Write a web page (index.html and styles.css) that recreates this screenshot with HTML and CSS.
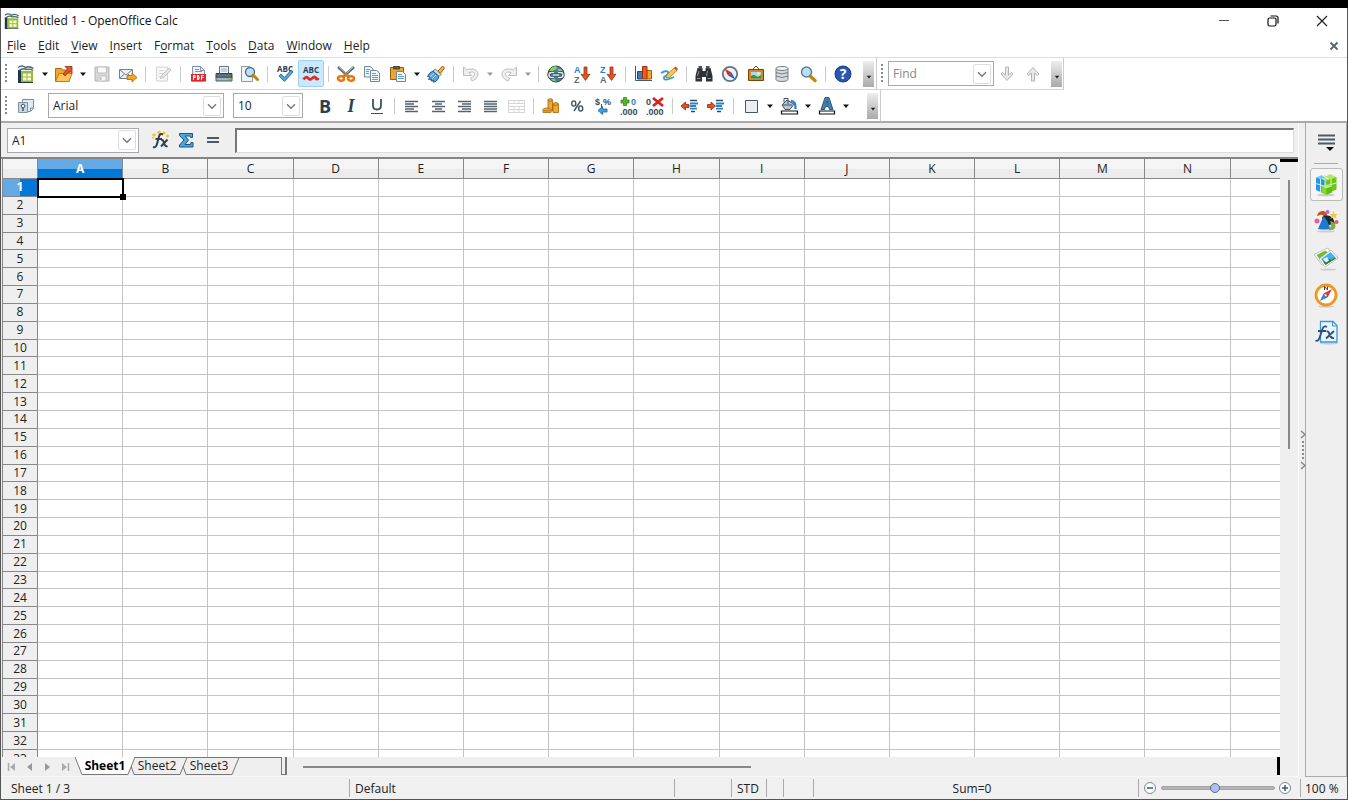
FILE: index.html
```html
<!DOCTYPE html>
<html lang="en">
<head>
<meta charset="utf-8">
<title>Untitled 1 - OpenOffice Calc</title>
<link rel="stylesheet" href="styles.css">
</head>
<body>
<svg class="defs" aria-hidden="true">
  <defs>
    <symbol id="calc" viewBox="0 0 20 20">
      <path d="M3 3h14v15H3z" fill="#f4f7ec"/>
      <path d="M2 6h3v12h12v1H2z" fill="#1c3550"/>
      <path d="M5 7h12v11H5z" fill="#9cba35"/>
      <path d="M7 9.500h3.500v3H7zm4.500 0H15v3h-3.500zm-4.500 4h3.500v3H7zm4.500 0H15v3h-3.500z" fill="#f8fbdc"/>
      <path d="M2 3.500q4-3 7.500 0 4-2 8 1M3 6.500q4-3 7.500-1 4-1 6.500 1" fill="none" stroke="#4d6676" stroke-width="1.400"/>
    </symbol>
    <symbol id="chev" viewBox="0 0 18 20"><path d="M4.500 8l4.500 4.500L13.500 8" fill="none" stroke="#777" stroke-width="1.500"/></symbol>
    <symbol id="tri" viewBox="0 0 12 26"><path d="M3 11.500h6L6 15z" fill="currentColor"/></symbol>
    <symbol id="arrowdown" viewBox="0 0 20 20"><path d="M8.500 3h3v8l3-2.500 1.500 1.500-6 6.500L4 10l1.500-1.500 3 2.500z" fill="#e8e8e8" stroke="#b5b5b5"/></symbol>
    <symbol id="sortarrow" viewBox="0 0 20 20"><path d="M12 3h3v8l3-1-4.500 6.500L9 10l3 1z" fill="#e2531d" stroke="#9b2d12" stroke-width=".8"/></symbol>
    <symbol id="undo" viewBox="0 0 20 20"><path d="M2.500 3v8.500h8L8 8.700c6-2.700 8 2.800 1.500 5.300l1.500 3c10-4 7-15-5.500-11.200z" fill="#efefef" stroke="#bdbdbd"/></symbol>
    <symbol id="indent" viewBox="0 0 20 20"><path d="M10 4.500h7M11 15.500h4" stroke="#2d4a60" stroke-width="1.300"/><path d="M10 7.500h8M10 10h6M10 12.700h7" stroke="#2c83c8" stroke-width="1.800"/></symbol>
  </defs>
</svg>
<div class="window">
  <header class="titlebar">
    <svg class="app-icon"><use href="#calc"/></svg>
    <h1>Untitled 1 - OpenOffice Calc</h1>
    <div class="win-controls">
      <button aria-label="Minimize"><svg class="ic"><path d="M5 9.500h10" stroke="#555"/></svg></button>
      <button aria-label="Restore"><svg class="ic"><rect x="5" y="7" width="8" height="8" rx="1.500" fill="none" stroke="#111" stroke-width="1.200"/><path d="M7.500 5h5.500q2 0 2 2v5.500" fill="none" stroke="#111" stroke-width="1.200"/></svg></button>
      <button aria-label="Close"><svg class="ic"><path d="M5 5l10 10M15 5L5 15" stroke="#222" stroke-width="1.200"/></svg></button>
    </div>
  </header>
  <nav class="menubar" aria-label="Menu">
    <button><u>F</u>ile</button><button><u>E</u>dit</button><button><u>V</u>iew</button><button><u>I</u>nsert</button><button>F<u>o</u>rmat</button><button><u>T</u>ools</button><button><u>D</u>ata</button><button><u>W</u>indow</button><button><u>H</u>elp</button>
    <button class="doc-close" aria-label="Close document"><svg class="ic"><path d="M6.500 6.500l7 7M13.500 6.500l-7 7" stroke="#5b6775" stroke-width="2"/></svg></button>
  </nav>

  <div class="toolrow">
    <div class="toolbar" role="toolbar" aria-label="Standard">
      <span class="grip"></span>
      <button class="tb" aria-label="New"><svg class="ic"><use href="#calc"/></svg></button>
      <button class="drop" aria-label="New options"><svg><use href="#tri"/></svg></button>
      <button class="tb" aria-label="Open"><svg class="ic"><path d="M1.500 17V4.500h6l1 1.500h7v11z" fill="#f3a62a" stroke="#b06a0c"/><path d="M1.500 17.500L5 9.500h13l-3 8z" fill="#ffc45a" stroke="#c5790f"/><path d="M9 10l4.500-5L11 2.500h7v7L15.500 7 11 12z" fill="#e8501f" stroke="#9c2a10" stroke-width=".8"/></svg></button>
      <button class="drop" aria-label="Open options"><svg><use href="#tri"/></svg></button>
      <button class="tb" aria-label="Save" disabled><svg class="ic"><path d="M3 3h14v14H3z" fill="#d8d8d8" stroke="#b4b4b4"/><path d="M5.500 3h9v6h-9zM6 12h8v5H6z" fill="#f8f8f8" stroke="#c0c0c0"/><path d="M7.500 13h2v3h-2z" fill="#bbb"/></svg></button>
      <button class="tb" aria-label="E-mail"><svg class="ic"><path d="M1.500 5.500h13v9h-13z" fill="#eef3f8" stroke="#6d8296"/><path d="M2 6l6 5 6-5M2 14l4.500-4M14 14l-4-4" fill="none" stroke="#6d8296"/><path d="M9 11.500h5V9l5 4.500-5 4.500v-2.500H9z" fill="#f6a623" stroke="#a7650c" stroke-width=".8"/></svg></button>
      <span class="sep"></span>
      <button class="tb" aria-label="Edit file" disabled><svg class="ic"><path d="M3.500 3h11v14h-11z" fill="#f7f7f7" stroke="#d2d2d2"/><path d="M6 6.500h5M6 9.500h4M6 12.500h3" stroke="#d4d4d4"/><path d="M7.500 14.500l1-3L16 4l2 2-7.500 7.500z" fill="#e4e4e4" stroke="#c4c4c4"/></svg></button>
      <span class="sep"></span>
      <button class="tb" aria-label="Export as PDF"><svg class="ic"><path d="M4.500 2.500h8l4 4V17h-12z" fill="#e9f2fa" stroke="#8195a8"/><path d="M12.500 2.500v4h4M7 5.500h4M7 7.500h7" fill="none" stroke="#8195a8"/><path d="M3 10h15v7.500H3z" fill="#e0252c"/><path d="M5.500 16v-4.500H7v2H5.500M9.500 11.500v4h1q1.300-2 0-4zM13.500 16v-4.500h2.500M13.500 13.500H16" fill="none" stroke="#fff" stroke-width="1.100"/></svg></button>
      <button class="tb" aria-label="Print"><svg class="ic"><path d="M5.500 2.500h9v7h-9z" fill="#f3f6fa" stroke="#5b7184"/><path d="M7 5h6M7 7h6" stroke="#96a7b5"/><path d="M2 9.500h16V14H2z" fill="#5b6f80" stroke="#32424f"/><path d="M2 13.500h16v3.500H2z" fill="#aab4bc" stroke="#4d5c68"/><path d="M14 14.500h3v1.500h-3z" fill="#7bd11f"/></svg></button>
      <button class="tb" aria-label="Page preview"><svg class="ic"><path d="M1.500 2.500h8l3 3v12h-11z" fill="#f0f4f8" stroke="#8a9aaa"/><circle cx="10" cy="8" r="4.500" fill="#b8e2fa" stroke="#4e6a80" stroke-width="1.300"/><path d="M13 11l4.500 4.500" stroke="#c68208" stroke-width="3" stroke-linecap="round"/></svg></button>
      <span class="sep"></span>
      <button class="tb" aria-label="Spelling"><svg class="ic"><text class="abc" x="10" y="8" text-anchor="middle">ABC</text><path d="M4 12l2-2 3.500 3.500L16 6l2 2-8.500 9.500z" fill="#4aa8e0" stroke="#1a5e96" stroke-width=".8"/></svg></button>
      <button class="tb active" aria-label="AutoSpellcheck" aria-pressed="true"><svg class="ic"><text class="abc" x="10" y="9" text-anchor="middle">ABC</text><path d="M2.500 15.500q2.500-4 5-1 2 2 4-0.500 2.500-2.500 3.500 0.500 1 1.500 2.500-.5" fill="none" stroke="#e02a20" stroke-width="2.800"/></svg></button>
      <span class="sep"></span>
      <button class="tb" aria-label="Cut"><svg class="ic"><path d="M2 3l11 10M18 3L7 13" stroke="#5e6e7a" stroke-width="2.600"/><path d="M3 3l10 9M17 3L8 12" stroke="#c3ccd2" stroke-width=".8"/><g fill="none" stroke="#e57a0a" stroke-width="2.600"><ellipse cx="5" cy="14.500" rx="3" ry="2.200"/><ellipse cx="15" cy="14.500" rx="3" ry="2.200"/><path d="M7 13l3-2.500 3 2.500"/></g></svg></button>
      <button class="tb" aria-label="Copy"><svg class="ic"><g fill="#eef5fb" stroke="#71889b"><path d="M2.500 2.500h6l2.500 2.500v8H2.500z"/><path d="M8.500 6.500h6L17.500 9v8.500h-9z"/></g><path d="M4 5.500h4M4 7.500h3M4 9.500h3M10 9.500h4M10 11.500h6M10 13.500h6M10 15.500h6" stroke="#6c9bc0"/></svg></button>
      <button class="tb" aria-label="Paste"><svg class="ic"><path d="M2.500 3.500h13v12h-13z" fill="#eda632" stroke="#946010"/><path d="M5.500 2.500h6V5h-6z" fill="#6c6250" stroke="#463e30"/><path d="M8.500 7.500h6l3 3v7h-9z" fill="#eef5fb" stroke="#71889b"/><path d="M10 10.500h4M10 12.500h6M10 14.500h6" stroke="#6c9bc0"/></svg></button>
      <button class="drop" aria-label="Paste options"><svg><use href="#tri"/></svg></button>
      <button class="tb" aria-label="Format paintbrush"><svg class="ic"><path d="M12 7l4.500-5 2 2-4 5.500z" fill="#f2b134" stroke="#96650f"/><path d="M9.500 5l5.500 5.500-2 2-6-5.500z" fill="#d5dde3" stroke="#66798a"/><path d="M7 7L13 12.500q-2 6-6 5.500l.5-2-2.500 1 .5-2-3 .5L4 13l-2.500-.5Q3.500 8 7 7z" fill="#55a3dc" stroke="#235d94"/><path d="M8 9.500l-4 3M10 11l-4 4" stroke="#b4dbf5"/></svg></button>
      <span class="sep"></span>
      <button class="tb" aria-label="Undo" disabled><svg class="ic"><use href="#undo"/></svg></button>
      <button class="drop" aria-label="Undo options" disabled><svg><use href="#tri"/></svg></button>
      <button class="tb" aria-label="Redo" disabled><svg class="ic flip"><use href="#undo"/></svg></button>
      <button class="drop" aria-label="Redo options" disabled><svg><use href="#tri"/></svg></button>
      <span class="sep"></span>
      <button class="tb" aria-label="Hyperlink"><svg class="ic"><circle cx="10" cy="10" r="8" fill="#3d81a8" stroke="#2c5266"/><path d="M4 5q4-4 7-2 0 3-3 3-1 2-4 2zM12 5q3-1 5 3l-3 2q-3-2-2-5zM4 12q3 0 6 5-5 1-6-5z" fill="#a2c94d"/><path d="M8 13.500H5.500a2.500 2.500 0 010-5H8M12 8.500h2.500a2.500 2.500 0 010 5H12M7 11h6" fill="none" stroke="#263a45" stroke-width="3"/><path d="M8 13.500H5.500a2.500 2.500 0 010-5H8M12 8.500h2.500a2.500 2.500 0 010 5H12M7 11h6" fill="none" stroke="#e6ecee" stroke-width="1.500"/></svg></button>
      <button class="tb" aria-label="Sort ascending"><svg class="ic"><text class="srt blue" x="2" y="9">A</text><text class="srt" x="2" y="19">Z</text><use href="#sortarrow"/></svg></button>
      <button class="tb" aria-label="Sort descending"><svg class="ic"><text class="srt blue" x="2" y="9">Z</text><text class="srt" x="2" y="19">A</text><use href="#sortarrow"/></svg></button>
      <span class="sep"></span>
      <button class="tb" aria-label="Chart"><svg class="ic"><path d="M2.500 2v14.500H19" fill="none" stroke="#445a6a"/><path d="M4.500 7.500h5V15h-5z" fill="#3a7db5" stroke="#1d4b75"/><path d="M13.500 6.500h5V15h-5z" fill="#f5a52a" stroke="#9b620c"/><path d="M9.500 2.500h4.500V15H9.500z" fill="#ee5a22" stroke="#9c300d"/></svg></button>
      <button class="tb" aria-label="Show draw functions"><svg class="ic"><path d="M2 9q6-3 7-1t-4 5q-1 4 5 2l5-2" fill="none" stroke="#2d9be0" stroke-width="1.800"/><path d="M7 14l1-3.500L15 4l3 2.500-7.500 7z" fill="#f7c942" stroke="#9b7423" stroke-width=".8"/><path d="M15 4l3 2.500 1-1.500-2.500-2.500z" fill="#d94228"/></svg></button>
      <span class="sep"></span>
      <button class="tb" aria-label="Find and replace"><svg class="ic"><path d="M3.500 4h5v3h3V4h5l2 8v5.500H12V13H8v4.500H1.500V12z" fill="#2e3336"/><path d="M4.500 2H8v3H4.500zm7.500 0h3.500v3H12z" fill="#4b5053"/><path d="M3.500 12l1.500-5M12.500 12l1-5M3 14.500h3.500M13.500 14.500H17" stroke="#8e989e"/></svg></button>
      <button class="tb" aria-label="Navigator"><svg class="ic"><circle cx="10" cy="10" r="7.200" fill="#eaf2fb" stroke="#65727e" stroke-width="1.800"/><path d="M4.500 4.500L8 11.500l3.500-3z" fill="#e5261d"/><path d="M15.500 15.500L8 11.500l3.500-3z" fill="#2467bd"/></svg></button>
      <button class="tb" aria-label="Gallery"><svg class="ic"><path d="M7 5l3-3 3 3" fill="none" stroke="#6b4b1d"/><path d="M2.500 5.500h15v11h-15z" fill="#d98520" stroke="#7b420b"/><path d="M5 8h10v6.500H5z" fill="#a5daf2"/><path d="M5 12q3-2 5 0t5-1v3.500H5z" fill="#448c31"/><circle cx="12.500" cy="9.500" r="1.200" fill="#fff39a"/></svg></button>
      <button class="tb" aria-label="Data sources"><svg class="ic"><path d="M4 4.500v11q0 2 6 2t6-2v-11" fill="#d5dade" stroke="#707c86"/><ellipse cx="10" cy="4.500" rx="6" ry="2" fill="#f0f3f5" stroke="#707c86"/><path d="M4 8.500q6 3 12 0M4 12q6 3 12 0" fill="none" stroke="#707c86"/></svg></button>
      <button class="tb" aria-label="Zoom"><svg class="ic"><path d="M12 12l5 4.500" stroke="#c98508" stroke-width="3.500" stroke-linecap="round"/><circle cx="8.500" cy="8" r="5" fill="#b7e0f8" stroke="#647f94" stroke-width="1.500"/></svg></button>
      <span class="sep"></span>
      <button class="tb" aria-label="Help"><svg class="ic"><circle cx="10" cy="10" r="8" fill="#2a58b0" stroke="#173a80"/><text class="q" x="10" y="15" text-anchor="middle">?</text></svg></button>
      <button class="more" aria-label="More standard tools"><svg><use href="#tri"/></svg></button>
    </div>
    <div class="toolbar find" role="toolbar" aria-label="Find">
      <span class="grip"></span>
      <div class="combo w-find"><input type="text" placeholder="Find" aria-label="Find text"><button aria-label="Find history"><svg><use href="#chev"/></svg></button></div>
      <button class="tb" aria-label="Find next" disabled><svg class="ic"><use href="#arrowdown"/></svg></button>
      <button class="tb" aria-label="Find previous" disabled><svg class="ic turn"><use href="#arrowdown"/></svg></button>
      <button class="more" aria-label="More find tools"><svg><use href="#tri"/></svg></button>
    </div>
  </div>

  <div class="toolrow">
    <div class="toolbar" role="toolbar" aria-label="Formatting">
      <span class="grip"></span>
      <button class="tb" aria-label="Styles and formatting"><svg class="ic"><path d="M6.500 3.500h11v9l-3 3h-8z" fill="#e2eaf1" stroke="#7b8e9f"/><path d="M17.500 12h-3v3" fill="none" stroke="#7b8e9f"/><path d="M2.500 6.500h9v10h-9z" fill="#c9d6e0" stroke="#8093a3"/><circle cx="7" cy="10" r="1.800" fill="#fff" stroke="#40586c"/><path d="M7 12v3" stroke="#40586c" stroke-width="1.500"/></svg></button>
      <div class="combo w-font"><select aria-label="Font name"><option>Arial</option></select><span class="chevbox"><svg><use href="#chev"/></svg></span></div>
      <div class="combo w-size"><select aria-label="Font size"><option>10</option></select><span class="chevbox"><svg><use href="#chev"/></svg></span></div>
      <button class="tb" aria-label="Bold"><b class="g">B</b></button>
      <button class="tb" aria-label="Italic"><i class="g serif">I</i></button>
      <button class="tb" aria-label="Underline"><svg class="ic"><path d="M6 3v6.500q0 4 4 4t4-4V3" fill="none" stroke="#3a5265" stroke-width="1.800"/><path d="M4 17.500h12" stroke="#3a5265"/></svg></button>
      <span class="sep"></span>
      <button class="tb" aria-label="Align left"><svg class="ic"><path d="M3 5.500h13M3 8h9M3 10.500h13M3 13h9M3 15.500h13" stroke="#56636e" stroke-width="1.400"/></svg></button>
      <button class="tb" aria-label="Align center"><svg class="ic"><path d="M4 5.500h13M7 8h7M4 10.500h13M7 13h7M4 15.500h13" stroke="#56636e" stroke-width="1.400"/></svg></button>
      <button class="tb" aria-label="Align right"><svg class="ic"><path d="M4 5.500h13M8 8h9M4 10.500h13M8 13h9M4 15.500h13" stroke="#56636e" stroke-width="1.400"/></svg></button>
      <button class="tb" aria-label="Justify"><svg class="ic"><path d="M4 5.500h13M4 8h13M4 10.500h13M4 13h13M4 15.500h13" stroke="#56636e" stroke-width="1.400"/></svg></button>
      <button class="tb" aria-label="Merge cells" disabled><svg class="ic"><path d="M2.500 4.500h16v12h-16zM2.500 7.500h16M2.500 10.500h16M2.500 13.500h16M8 4.500v3M13 4.500v3M8 10.500v6M13 10.500v6" fill="none" stroke="#d6d6d6"/></svg></button>
      <span class="sep"></span>
      <button class="tb" aria-label="Currency"><svg class="ic"><g fill="#f0a830" stroke="#a4660e" stroke-width=".8"><path d="M7 4v11h4.500V4z"/><ellipse cx="9.200" cy="4" rx="2.300" ry="1.300"/><path d="M12 8v8.500h5.500V8z"/><ellipse cx="14.700" cy="8" rx="2.700" ry="1.400"/><path d="M2 13.500v3h8v-3z"/><ellipse cx="6" cy="13.500" rx="4" ry="1.500"/></g></svg></button>
      <button class="tb" aria-label="Percent"><svg class="ic"><g fill="none" stroke="#3a5265" stroke-width="1.400"><ellipse cx="6.800" cy="7.500" rx="2" ry="2.600"/><ellipse cx="13.700" cy="12.500" rx="2" ry="2.600"/><path d="M13.500 5L7 15"/></g></svg></button>
      <button class="tb" aria-label="Standard number format"><svg class="ic"><text class="num" x="2" y="9">$</text><text class="num" x="10" y="9">%</text><path d="M8.500 8v3" stroke="#3a5265"/><path d="M5 14.500l4.500-4V13H14v3H9.500v2.500z" fill="#3fa3df" stroke="#1c5a8c" stroke-width=".8"/></svg></button>
      <button class="tb" aria-label="Add decimal place"><svg class="ic"><path d="M4.500 1.500h3v2.500H10v3H7.500v2.500h-3V7H2V4h2.500z" fill="#5ab32c" stroke="#2c7814" stroke-width=".7"/><text class="num blue" x="12" y="9">0</text><text class="num" x="1" y="19">.000</text></svg></button>
      <button class="tb" aria-label="Delete decimal place"><svg class="ic"><text class="num" x="1" y="9">0</text><text class="num" x="1" y="19">.000</text><path d="M8 2l10 8M18 2L8 10" stroke="#d6201a" stroke-width="2.800"/></svg></button>
      <span class="sep"></span>
      <button class="tb" aria-label="Decrease indent"><svg class="ic"><use href="#indent"/><path d="M1 10l4.500-4v2.500H9v3H5.500V14z" fill="#e2531d" stroke="#8e2a12" stroke-width=".8"/></svg></button>
      <button class="tb" aria-label="Increase indent"><svg class="ic"><use href="#indent"/><path d="M9.500 10L5 6v2.500H1.500v3H5V14z" fill="#e2531d" stroke="#8e2a12" stroke-width=".8"/></svg></button>
      <span class="sep"></span>
      <button class="tb" aria-label="Borders"><svg class="ic"><path d="M4.500 4.500h12v12h-12z" fill="#e8eef4" stroke="#4a5661"/></svg></button>
      <button class="drop" aria-label="Border options"><svg><use href="#tri"/></svg></button>
      <button class="tb" aria-label="Background color"><svg class="ic"><path d="M3 9l5-5 7 4-4 5.500H6z" fill="#b7c6d1" stroke="#3f5362"/><path d="M5 6.500V2.500h4V8M4 9h9" fill="none" stroke="#3f5362"/><path d="M12 5q5 0 4.500 8" fill="none" stroke="#2c86cc" stroke-width="2.400"/><path d="M2.500 15h16v3h-16z" fill="#fff" stroke="#111" stroke-width="1.200"/></svg></button>
      <button class="drop" aria-label="Background options"><svg><use href="#tri"/></svg></button>
      <button class="tb" aria-label="Font color"><svg class="ic"><path d="M4 13.500L8 1.500h4L16 13.500h-3.500l-1-3h-3l-1 3zM8.900 8h2.200L10 5z" fill="#3e83b5" fill-rule="evenodd" stroke="#1f3f58" stroke-width=".8"/><path d="M2.500 15h15v3h-15z" fill="#fff" stroke="#111" stroke-width="1.200"/></svg></button>
      <button class="drop" aria-label="Font color options"><svg><use href="#tri"/></svg></button>
      <button class="more gap" aria-label="More formatting tools"><svg><use href="#tri"/></svg></button>
    </div>
  </div>

  <div class="workspace">
    <main class="editor">
      <div class="formulabar">
        <div class="combo w-name"><input type="text" value="A1" aria-label="Name box"><button aria-label="Name box list"><svg><use href="#chev"/></svg></button></div>
        <div class="ftools">
          <button class="tb" aria-label="Function wizard"><svg class="ic"><g fill="#f6c330"><circle cx="4" cy="5" r="1.800"/><circle cx="9" cy="2.500" r="1.800"/><circle cx="14" cy="3" r="1.500"/><circle cx="17.500" cy="6" r="1.500"/><circle cx="3" cy="8" r="1"/></g><path d="M3 17q3 1 4-3L9 6.500Q10 3 13 4.500M5.500 9H12M11 10q2-1 3 3t3.500 3M17.500 9.500L11 16.500" fill="none" stroke="#30414e" stroke-width="2"/></svg></button>
          <button class="tb" aria-label="Sum"><svg class="ic"><path d="M3.500 3.500h13v4h-2l-.5-1.500H9L12.500 10 9 14.500h5.500l.5-2h2v4.500h-13.500v-2L8 10 3.500 5.500z" fill="#49a7df" stroke="#1b5687"/></svg></button>
          <button class="tb" aria-label="Function"><svg class="ic"><path d="M5 8h12M5 12h12" stroke="#4d5a66" stroke-width="2"/></svg></button>
        </div>
        <input class="formula" type="text" aria-label="Input line">
      </div>
      <div class="sheet-area">
        <div class="sheet"><table id="grid"><thead></thead><tbody></tbody></table></div>
        <div class="vscroll"><div class="vsplit"></div><div class="vthumb"></div></div>
      </div>
      <div class="tabbar">
        <div class="tabnav">
          <button aria-label="First sheet"><svg><path d="M5.500 5v8" stroke="#aaa" stroke-width="1.500"/><path d="M12 5v8L7 9z" fill="#aaa"/></svg></button>
          <button aria-label="Previous sheet"><svg><path d="M11 5v8L6 9z" fill="#999"/></svg></button>
          <button aria-label="Next sheet"><svg><path d="M6 5v8l5-4z" fill="#999"/></svg></button>
          <button aria-label="Last sheet"><svg><path d="M11.500 5v8" stroke="#aaa" stroke-width="1.500"/><path d="M5 5v8l5-4z" fill="#aaa"/></svg></button>
        </div>
        <div class="tabs">
          <button class="tab current"><svg viewBox="0 0 60 18" preserveAspectRatio="none"><path d="M0 0l7 17.500h46L60 0" fill="#fff" stroke="#777"/></svg><span>Sheet1</span></button>
          <button class="tab"><svg viewBox="0 0 60 18" preserveAspectRatio="none"><path d="M4 9l3 8.500h46L60 .5H6" fill="none" stroke="#777"/></svg><span>Sheet2</span></button>
          <button class="tab"><svg viewBox="0 0 60 18" preserveAspectRatio="none"><path d="M4 9l3 8.500h46L60 .5H6" fill="none" stroke="#777"/></svg><span>Sheet3</span></button>
          <span class="tabfill"></span>
        </div>
        <div class="tabsplit"></div>
        <div class="hscroll"><div class="hthumb"></div></div>
        <div class="hsplit"></div>
      </div>
    </main>
    <div class="splitter"><svg viewBox="0 0 8 44"><path d="M2 3l4 3.500L2 10M2 34l4 3.500L2 41" fill="none" stroke="#888" stroke-width="1.500"/><path d="M4 13v18" stroke="#888" stroke-width="2" stroke-dasharray="2 2"/></svg></div>
    <aside class="sidebar">
      <button class="side menu" aria-label="Sidebar settings"><svg class="ic big"><path d="M4 6.500h17M4 10.500h17M4 14.500h17" stroke="#4c5a62" stroke-width="1.800"/><path d="M12 18h8l-4 4z" fill="#111"/></svg></button>
      <hr>
      <button class="side on" aria-label="Properties"><svg class="ic big"><ellipse cx="12" cy="23" rx="9" ry="1.500" fill="#ccc"/><path d="M2 5.500L11 8v14l-9-4z" fill="#1f98ea"/><path d="M11 8l11.500-3v12.500L12 22z" fill="#6cc718"/><path d="M2 5.500L8 3l6 1.500L8 7z" fill="#6cc8fa"/><path d="M8 7l8-5 6.500 3L12 8.500z" fill="#b2e964"/><path d="M2 11.500l9 3M6.500 7v13M11 8v8M11.500 14l11-3M17 6.500v13M8 3l6.500 4" fill="none" stroke="#fff" stroke-width=".8"/><path d="M7.500 14.500l5-2 5.500 2-5.500 2z" fill="#bdf077"/><path d="M7.500 14.500l5 2v6.500l-5-2.500z" fill="#85d92b"/><path d="M12.500 16.500l5.500-2v6L12.500 23z" fill="#5fbb15"/></svg></button>
      <button class="side" aria-label="Styles"><svg class="ic big"><ellipse cx="12" cy="22.500" rx="9" ry="1" fill="#ccc"/><path d="M3 7q1-5 6-5 3 0 4 4l-3 2q-1-3-4-2z" fill="#c65317"/><path d="M8 8q5-4 11 1l2 6-6 1q-6-2-7-8z" fill="#18292f"/><path d="M9.500 7L4 20q6 1 12 0-1-7-6.500-13z" fill="#1d7ad0"/><path d="M16 12q6 1 5.500 6-2 4-7 3 4-4 1.500-9z" fill="#84a947"/><path d="M19.500 2l1 3h3l-2 2 1 3-3-2-3 2 1-3-2-2h3z" fill="#f6c438"/><circle cx="13.500" cy="3" r="2" fill="#b85ee6"/><circle cx="3" cy="12" r="2.500" fill="#e95ba4"/><circle cx="22.500" cy="13" r="2" fill="#ef5266"/></svg></button>
      <button class="side" aria-label="Gallery"><svg class="ic big"><ellipse cx="14" cy="23.500" rx="8" ry="1" fill="#ccc"/><path d="M0 8.500L14 2l6 9L8 19z" fill="#fff" stroke="#aaa" stroke-width=".7"/><path d="M2.500 9l9-4.500 2 2-8 6.500z" fill="#72bd2b"/><path d="M5 13l12-9 7 8-13 9z" fill="#fff" stroke="#aaa" stroke-width=".7"/><path d="M7 13l9.500-7 5.500 6-10.500 7z" fill="#49afe8"/><path d="M9 15.500l3.500-1 3-2 2 1.500 3-2.500 1.500 1-10.500 6.500z" fill="#397b37"/><path d="M9 13l4-2 2 3.500-3 2z" fill="#e9f4fa"/></svg></button>
      <button class="side" aria-label="Navigator"><svg class="ic big"><ellipse cx="12" cy="23.500" rx="8" ry="1" fill="#ccc"/><circle cx="12" cy="12" r="10" fill="#fff" stroke="#f0971e" stroke-width="2.800"/><path d="M10.500 7V3.500l3 3.500V3.500" fill="none" stroke="#444"/><path d="M18 6L9.500 10.500l4 4z" fill="#e4342b"/><path d="M6 18l3.500-7.500 4 4z" fill="#3a84c8"/><circle cx="11.700" cy="12.300" r="1" fill="#fff"/></svg></button>
      <button class="side" aria-label="Functions"><svg class="ic big"><ellipse cx="15" cy="23.500" rx="9" ry="1" fill="#ccc"/><path d="M6.500 1.500H19l4 4V22H6.500z" fill="#eaf6fd" stroke="#379bd2" stroke-width="1.300"/><path d="M18.500 1.500v4.500H23" fill="none" stroke="#379bd2"/><path d="M1.500 20.500q3 1.500 4.500-4L8.500 9Q10 5 13 7M4 11h8M12.500 11.500q2-1 3 3t4.500 3.500M20 11l-8 7.500" fill="none" stroke="#2f4e7c" stroke-width="1.800"/></svg></button>
    </aside>
  </div>

  <footer class="statusbar">
    <span>Sheet 1 / 3</span><span>Default</span><span></span><span>STD</span><span></span><span></span><span class="sum">Sum=0</span>
    <div class="zoom">
      <button aria-label="Zoom out"><svg><circle cx="7" cy="7" r="5.500" fill="#fff" stroke="#7a8794"/><path d="M4 7h6" stroke="#2d5d8a" stroke-width="1.500"/></svg></button>
      <input type="range" min="0" max="100" value="48" aria-label="Zoom">
      <button aria-label="Zoom in"><svg><circle cx="7" cy="7" r="5.500" fill="#fff" stroke="#7a8794"/><path d="M4 7h6M7 4v6" stroke="#2d5d8a" stroke-width="1.500"/></svg></button>
    </div>
    <span>100 %</span>
  </footer>
</div>
<script src="app.js"></script>
</body>
</html>
```
FILE: styles.css
```css
* { box-sizing: border-box; }
body {
  margin: 0;
  height: 100vh;
  padding-top: 8px;
  background: #000;
  font: 12px/16px "Open Sans", "Noto Sans", sans-serif;
  color: #222;
  overflow: hidden;
}
button, input, select {
  font: inherit;
  color: inherit;
  border: 0;
  padding: 0;
  margin: 0;
  background: none;
}
svg { display: block; }
.defs { position: absolute; width: 0; height: 0; }
.window {
  height: 100%;
  display: flex;
  flex-direction: column;
  background: #fff;
  border: solid #555;
  border-width: 0 1px 1px;
}

/* Title and menu */
.titlebar { display: flex; align-items: center; height: 26px; padding-left: 2px; flex: none; }
.titlebar h1 { margin: 0; font-size: 12px; font-weight: 400; color: #111; }
.app-icon { width: 18px; height: 18px; margin-right: 2px; }
.win-controls { margin-left: auto; display: flex; padding-right: 1px; }
.win-controls button { width: 49px; height: 24px; display: grid; place-items: center; }
.menubar { display: flex; align-items: center; height: 24px; padding-left: 6px; gap: 12px; border-bottom: 1px solid #dcdcdc; flex: none; }
.menubar u { text-underline-offset: 2px; }
.doc-close { margin-left: auto; width: 26px; display: grid; place-items: center; }

/* Toolbars */
.toolrow { display: flex; flex: none; }
.toolrow { height: 33px; border-bottom: 2px solid #aaa; }
.toolrow:has(.find) { height: 32px; border-bottom: 0; }
.toolbar { display: flex; align-items: center; border-right: 1px solid #ccc; padding-right: 2px; }
.toolrow:has(.find) .toolbar { border-bottom: 1px solid #d5d5d5; }
.grip { width: 2px; height: 20px; margin: 0 6px 0 4px; background: repeating-linear-gradient(#888 0 2px, transparent 2px 4px); flex: none; }
.ic { width: 20px; height: 20px; }
.ic.big { width: 25px; height: 25px; }
.flip { transform: scaleX(-1); }
.turn { transform: rotate(180deg); }
.tb { width: 26px; height: 27px; display: grid; place-items: center; flex: none; }
.tb.active { background: #cce8ff; border: 1px solid #99d1ff; border-radius: 2px; }
.drop { width: 12px; height: 26px; color: #111; flex: none; }
.drop:disabled { color: #999; }
.drop svg { width: 12px; height: 26px; }
.sep { width: 9px; height: 16px; background: linear-gradient(#ccc, #ccc) center / 1px 100% no-repeat; flex: none; }
.more { width: 11px; height: 26px; margin-left: 7px; background: linear-gradient(#eee, #aaa); align-self: center; display: flex; align-items: flex-end; justify-content: center; }
.more svg { width: 12px; height: 20px; flex: none; }
.find { padding-right: 1px; }
.find .more { margin-left: 5px; }
.find .grip { margin-right: 5px; }
.more.gap { margin-left: 15px; }
.combo { display: flex; align-items: center; height: 25px; border: 1px solid #a8a8b0; background: #fff; flex: none; padding-right: 2px; }
.combo input, .combo select { flex: 1; min-width: 0; height: 100%; padding-left: 4px; appearance: none; outline: 0; }
.combo input::placeholder { color: #888; }
.combo button, .chevbox { width: 18px; height: 20px; border: 1px solid #ddd; border-radius: 2px; background: #fff; display: grid; place-items: center; flex: none; }
.chevbox { pointer-events: none; }
.combo button svg, .chevbox svg { width: 16px; height: 18px; }
.w-find { width: 106px; }
.w-font { width: 176px; margin: 0 9px; }
.w-size { width: 70px; margin-right: 9px; }
.w-name { width: 132px; }
.g { font-size: 18px; line-height: 20px; color: #2a4052; }
.serif { font-family: "Liberation Serif", serif; font-weight: 700; }
.abc { font: 700 8px "Open Sans", sans-serif; fill: #2a4052; }
.srt { font: 700 9px/10px "Liberation Sans", sans-serif; fill: #5d6a74; }
.num { font: 700 9px/10px "Liberation Sans", sans-serif; fill: #33495a; }
.srt.blue, .num.blue { fill: #2a7fd4; }
.q { font: 700 14px "Open Sans", sans-serif; fill: #fff; }

/* Work area */
.workspace { flex: 1; min-height: 0; display: flex; background: #efefef; }
.editor { flex: 1; min-width: 0; display: flex; flex-direction: column; border-right: 1px solid #fff; }
.formulabar { display: flex; align-items: center; height: 36px; padding: 0 4px 0 6px; border-bottom: 2px solid #858585; flex: none; }
.ftools { display: flex; padding: 0 10px 0 8px; }
.formula { flex: 1; min-width: 0; height: 25px; padding: 0 4px; background: #fff; border: 1px solid #ddd; border-top: 2px solid #777; border-left: 2px solid #777; }
.sheet-area { flex: 1; min-height: 0; display: flex; }
.sheet { flex: 1; min-width: 0; overflow: hidden; background: #fff; margin-left: 1px; }
#grid { width: calc(100% + 36px); height: calc(100% + 11px); table-layout: fixed; border-spacing: 0; }
#grid th, #grid td { padding: 0; border: solid #c4c4c4; border-width: 0 1px 1px 0; line-height: 16px; }
#grid th { font-weight: 400; border-color: #888; background: #efefef; text-align: center; }
#grid thead th { height: 20px; background: linear-gradient(#f5f5f5 50%, #ececec 50%); }
#grid thead th:first-child { width: 36px; }
#grid th:first-child { border-left: 1px solid #888; }
#grid thead th.sel { background: linear-gradient(#62a9e6 50%, #0078d7 50%); color: #fff; font-weight: 700; }
#grid tbody th.sel { background: linear-gradient(90deg, #62a9e6 50%, #0078d7 50%); color: #fff; font-weight: 700; }
#grid td.cursor { position: relative; outline: 2px solid #000; outline-offset: -1px; }
#grid td.cursor::after { content: ""; position: absolute; right: -4px; bottom: -4px; width: 6px; height: 6px; background: #000; z-index: 1; }
.vscroll { width: 18px; display: flex; flex-direction: column; align-items: center; flex: none; }
.vsplit { width: 100%; height: 3px; background: #000; margin-bottom: 18px; flex: none; }
.vthumb { width: 2px; height: 45%; background: #888; }

.tabbar { display: flex; height: 20px; flex: none; border-bottom: 1px solid #f8f8f8; }
.tabnav { display: flex; padding-left: 2px; }
.tabnav button { width: 18px; height: 19px; }
.tabnav svg { width: 18px; height: 18px; }
.tabs { display: flex; width: 206px; }
.tab { position: relative; width: 60px; height: 18px; flex: none; margin-right: -8px; }
.tab svg { position: absolute; inset: 0; width: 100%; height: 100%; overflow: visible; }
.tab span { position: relative; }
.tab.current { font-weight: 700; color: #000; z-index: 1; }
.tabfill { flex: 1; border-top: 1px solid #777; margin-left: 8px; height: 18px; }
.tabsplit { width: 6px; height: 18px; border: solid #777; border-width: 0 2px 1px 1px; }
.hscroll { flex: 1; padding: 9px 0 0 16px; }
.hthumb { width: 46%; height: 2px; background: #888; }
.hsplit { width: 3px; height: 18px; margin-right: 18px; background: #000; }

.splitter { width: 7px; border-right: 1px solid #aaa; display: flex; align-items: center; flex: none; }
.splitter svg { width: 8px; height: 44px; flex: none; }
.sidebar { width: 41px; display: flex; flex-direction: column; align-items: center; gap: 4px; border-right: 1px solid #aaa; border-bottom: 1px solid #aaa; flex: none; }
.sidebar hr { width: 24px; margin: 0; border: 0; border-top: 1px solid #aaa; }
.side { width: 33px; height: 33px; border: 1px solid transparent; border-radius: 3px; display: grid; place-items: center; flex: none; }
.side.menu { height: 36px; }
.side.on { border-color: #bbb; background: #f5f5f5; }

/* Status */
.statusbar { flex: none; height: 22px; display: grid; grid-template-columns: 348fr 325fr 57px 35px 17px 30px 325fr 162px 47px; padding: 2px 0; background: #f0f0f0; }
.statusbar > * { border-left: 1px solid #aaa; padding-left: 5px; line-height: 20px; overflow: hidden; white-space: nowrap; }
.statusbar > :first-child { border-left: 0; padding-left: 10px; }
.statusbar .sum { text-align: center; padding: 0 8px 0 0; }
.statusbar > :last-child { padding-left: 4px; }
.statusbar .zoom { display: flex; align-items: center; justify-content: space-between; padding: 0 8px 0 4px; }
.zoom svg { width: 14px; height: 14px; }
.zoom input { appearance: none; width: 114px; height: 4px; background: #b4b4b4; border: 1px solid #a4a4a4; border-radius: 2px; }
.zoom input::-webkit-slider-thumb { appearance: none; width: 10px; height: 10px; border-radius: 50%; background: #a9c2f0; border: 1px solid #5e6c84; }
```
FILE: app.js
```javascript
const columns = "ABCDEFGHIJKLMNO".split("");
const ROWS = 33;
const grid = document.getElementById("grid");

const head = grid.tHead.insertRow();
head.appendChild(document.createElement("th"));
columns.forEach((name, i) => {
  const th = document.createElement("th");
  th.scope = "col";
  th.textContent = name;
  if (i === 0) th.className = "sel";
  head.appendChild(th);
});

for (let r = 1; r <= ROWS; r++) {
  const row = grid.tBodies[0].insertRow();
  const th = document.createElement("th");
  th.scope = "row";
  th.textContent = r;
  if (r === 1) th.className = "sel";
  row.appendChild(th);
  columns.forEach((_, c) => {
    const td = row.insertCell();
    if (r === 1 && c === 0) td.className = "cursor";
  });
}
```
